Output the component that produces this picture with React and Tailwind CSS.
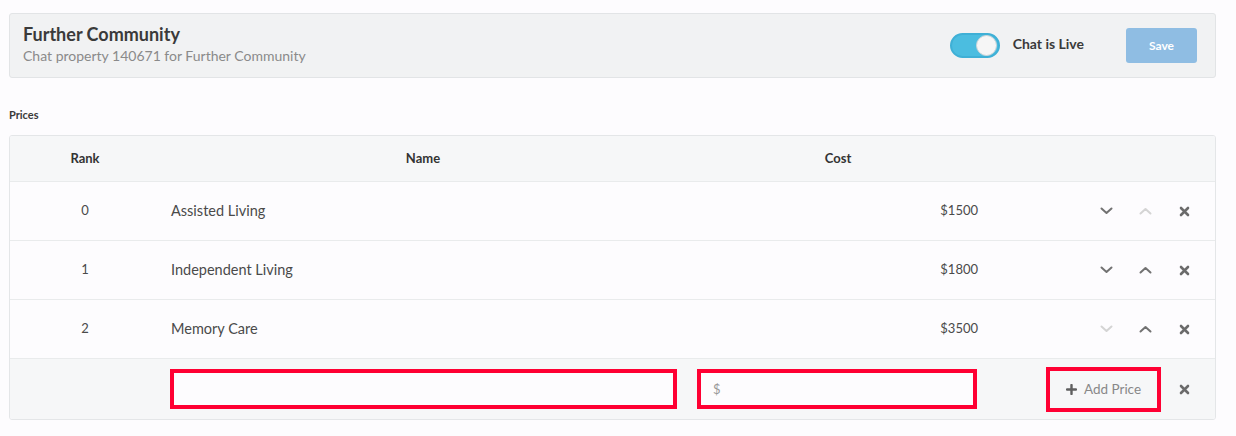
import { useState } from "react";

const prices = [
  { rank: 0, name: "Assisted Living", cost: "$1500", canDown: true, canUp: false },
  { rank: 1, name: "Independent Living", cost: "$1800", canDown: true, canUp: true },
  { rank: 2, name: "Memory Care", cost: "$3500", canDown: false, canUp: true },
];

function ChevronDown({ muted }) {
  return (
    <svg width="13" height="8" viewBox="0 0 13 8" className={muted ? "text-[#d4d4d4]" : "text-[#727272]"}>
      <polyline points="1.5,1.5 6.5,6 11.5,1.5" fill="none" stroke="currentColor" strokeWidth="2" strokeLinecap="round" strokeLinejoin="round" />
    </svg>
  );
}

function ChevronUp({ muted }) {
  return (
    <svg width="13" height="8" viewBox="0 0 13 8" className={muted ? "text-[#d4d4d4]" : "text-[#727272]"}>
      <polyline points="1.5,6.5 6.5,2 11.5,6.5" fill="none" stroke="currentColor" strokeWidth="2" strokeLinecap="round" strokeLinejoin="round" />
    </svg>
  );
}

function Times() {
  return (
    <svg width="11" height="11" viewBox="0 0 11 11" className="text-[#6b6b6b]">
      <path d="M2 2 L9 9 M9 2 L2 9" stroke="currentColor" strokeWidth="2.6" strokeLinecap="round" />
    </svg>
  );
}

function Plus() {
  return (
    <svg width="11" height="11" viewBox="0 0 11 11" className="text-[#5f5f5f]">
      <path d="M5.5 1 V10 M1 5.5 H10" stroke="currentColor" strokeWidth="2.4" strokeLinecap="round" />
    </svg>
  );
}

export default function App() {
  const [live, setLive] = useState(true);

  return (
    <div className="min-h-[436px] w-[1236px] bg-[#fdfcfe] pl-[9px] pr-[20px] pt-[13px] font-['Lato','Noto_Sans',sans-serif] text-[#333]">
      {/* Header */}
      <div className="flex h-[65px] items-center justify-between rounded-[3px] border border-[#e2e4e6] bg-[#f1f2f3] pl-[13px] pr-[18px]">
        <div className="mb-[3px] flex flex-col">
          <h2 className="text-[18px] font-bold leading-[22px] text-[#3a3a3a]">Further Community</h2>
          <p className="mt-[2px] text-[14px] leading-[18px] text-[#8a8a8a]">Chat property 140671 for Further Community</p>
        </div>
        <div className="flex items-center">
          <button
            onClick={() => setLive(!live)}
            className={`flex h-[25px] w-[50px] items-center rounded-full border-2 border-[#3fb0d6] px-[1px] ${live ? "justify-end bg-[#4bbde0]" : "justify-start bg-gray-300"}`}
          >
            <span className="h-[21px] w-[21px] rounded-full border border-[#cfd5d8] bg-[#f6f6f6]" />
          </button>
          <span className="mb-[4px] ml-[13px] text-[14px] font-bold text-[#3a3a3a]">Chat is Live</span>
          <button className="ml-[42px] h-[35px] w-[71px] rounded-[3px] bg-[#8fbde3] text-[12px] font-bold text-white">Save</button>
        </div>
      </div>

      <div className="mt-[30px] text-[11px] font-bold leading-[14px] text-[#3a3a3a]">Prices</div>

      {/* Table */}
      <div className="mt-[13px] overflow-hidden rounded-[3px] border border-[#e4e6e8] text-[13px]">
        <div className="grid h-[45px] grid-cols-[150px_526px_304px_1fr] items-center bg-[#f6f7f8] font-bold text-[#333]">
          <div className="text-center">Rank</div>
          <div className="text-center">Name</div>
          <div className="text-center">Cost</div>
          <div />
        </div>

        {prices.map((p) => (
          <div key={p.rank} className="grid h-[59px] grid-cols-[150px_526px_304px_1fr] items-center border-t border-[#e9ebec] bg-[#fdfcfe] text-[#4a4a4a]">
            <div className="text-center">{p.rank}</div>
            <div className="pl-[11px] text-[14.5px]">{p.name}</div>
            <div className="pr-[12px] text-right">{p.cost}</div>
            <div className="flex items-center justify-end pr-[11px]">
              <span className="flex w-[39px] justify-center"><ChevronDown muted={!p.canDown} /></span>
              <span className="flex w-[39px] justify-center"><ChevronUp muted={!p.canUp} /></span>
              <span className="flex w-[39px] justify-center"><Times /></span>
            </div>
          </div>
        ))}

        <div className="grid h-[61px] grid-cols-[150px_526px_304px_1fr] items-center border-t border-[#e9ebec] bg-[#f6f7f8]">
          <div />
          <div className="pl-[10px] pr-[9px]">
            <input className="h-[40px] w-full border-4 border-[#ff0033] bg-[#fdfcfe] px-3 outline-none" />
          </div>
          <div className="pl-[11px] pr-[13px]">
            <input placeholder="$" className="h-[40px] w-full border-4 border-[#ff0033] bg-[#fdfcfe] px-[12px] text-[13px] outline-none placeholder:text-[#999]" />
          </div>
          <div className="flex items-center justify-end pr-[11px]">
            <button className="mr-[4px] flex h-[45px] w-[115px] items-center justify-center gap-[7px] border-4 border-[#ff0033] text-[13.5px] text-[#888]">
              <Plus />
              <span>Add Price</span>
            </button>
            <span className="flex w-[39px] justify-center"><Times /></span>
          </div>
        </div>
      </div>
    </div>
  );
}
